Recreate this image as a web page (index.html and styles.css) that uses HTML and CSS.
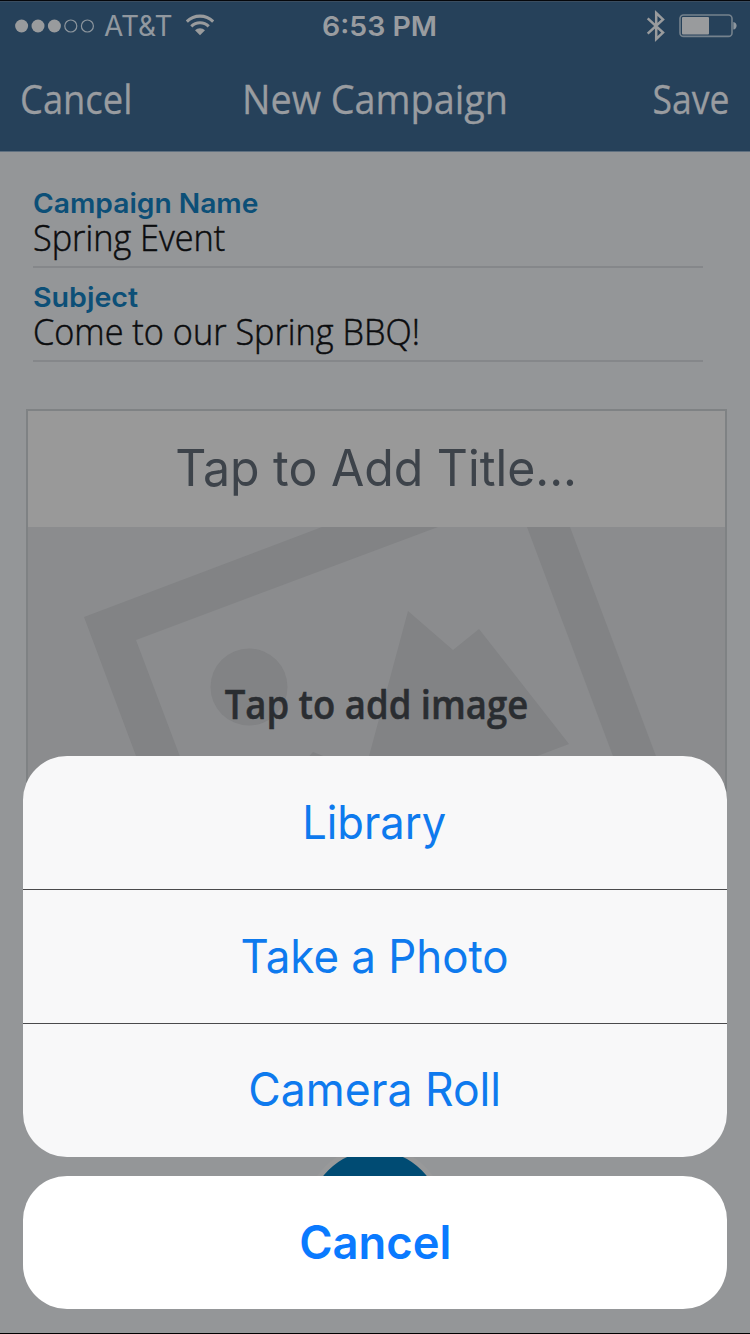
FILE: index.html
```html
<!DOCTYPE html>
<html lang="en">
<head>
<meta charset="utf-8">
<title>New Campaign</title>
<link rel="stylesheet" href="styles.css">
</head>
<body>
<div class="screen">
  <header class="header">
    <div class="status">
      <div class="status-left">
        <svg class="signal" width="80" height="14" viewBox="0 0 80 14">
          <g fill="#999b9d"><circle cx="6.6" cy="7" r="6.5"/><circle cx="23" cy="7" r="6.5"/><circle cx="39.4" cy="7" r="6.5"/></g>
          <g fill="none" stroke="#8d969e" stroke-width="1.2"><circle cx="55.8" cy="7" r="6"/><circle cx="72.4" cy="7" r="6"/></g>
        </svg>
        <span class="carrier">AT&amp;T</span>
        <svg class="wifi" width="28" height="22" viewBox="0 0 28 22">
          <g fill="none" stroke="#999b9d" stroke-width="3.1"><path d="M.8 7.600a18.700 18.700 0 0 1 26.400 0"/><path d="M5.300 12.400a12.300 12.300 0 0 1 17.400 0"/></g>
          <path fill="#999b9d" d="M9 16.300a7.100 7.100 0 0 1 10 0L14 21.300z"/>
        </svg>
      </div>
      <div class="clock"><span class="fit fit-clock">6:53 PM</span></div>
      <div class="status-right">
        <svg width="20" height="32" viewBox="0 0 20 32"><path fill="none" stroke="#999b9d" stroke-width="2.500" d="M1.700 8.300 17 22.600 10.200 29V3L17 9.400 1.700 23.700"/></svg>
        <svg width="59" height="24" viewBox="0 0 59 24">
          <rect x="1" y="1" width="52" height="21.4" rx="3.5" fill="none" stroke="#75828d" stroke-width="1.6"/>
          <rect x="3" y="3" width="27" height="17.4" rx="1" fill="#999b9d"/>
          <path fill="#8d969e" d="M54.3 8c4.4.4 4.4 7.200 0 7.600z"/>
        </svg>
      </div>
    </div>
    <nav class="nav">
      <span class="nav-left"><span class="fit fit-back">Cancel</span></span>
      <span class="nav-title"><span class="fit fit-title">New Campaign</span></span>
      <span class="nav-right"><span class="fit fit-save">Save</span></span>
    </nav>
  </header>

  <main class="content">
    <div class="field">
      <div class="label"><span class="fit fit-label1">Campaign Name</span></div>
      <div class="value"><span class="fit fit-value">Spring Event</span></div>
    </div>
    <div class="field">
      <div class="label"><span class="fit fit-label2">Subject</span></div>
      <div class="value"><span class="fit fit-value">Come to our Spring BBQ!</span></div>
    </div>
    <section class="card">
      <div class="card-title"><span class="fit fit-heading">Tap to Add Title...</span></div>
      <div class="photo">
        <svg class="placeholder" width="697" height="420" viewBox="28 527 697 420">
          <g fill="#828385">
            <path d="M84 617 322 527H438L136 640 216 852H172z"/>
            <path d="M527 527H570L692 852H649z"/>
            <circle cx="249" cy="687" r="38.500"/>
            <path d="M408 611 453 650 479 629 569 744 350 827z"/>
            <path d="M313 752 336 761 345 800H270z"/>
          </g>
        </svg>
        <div class="photo-text"><span class="fit fit-photo">Tap to add image</span></div>
      </div>
    </section>
  </main>

  <div class="add-button"></div>

  <div class="sheet">
    <div class="group">
      <div class="option"><span class="fit fit-library">Library</span></div>
      <div class="option"><span class="fit fit-take">Take a Photo</span></div>
      <div class="option"><span class="fit fit-roll">Camera Roll</span></div>
    </div>
    <div class="dismiss"><span class="fit fit-cancel">Cancel</span></div>
  </div>
</div>
</body>
</html>
```

FILE: styles.css
```css
* { box-sizing: border-box; }
body { margin: 0; font-family: Inter, "Liberation Sans", sans-serif; }
svg { display: block; }
.screen {
  position: relative;
  width: 750px;
  height: 1334px;
  overflow: hidden;
  background: #949698;
  border-top: 1px solid #05070b;
  border-bottom: 1px solid #000;
}

/* Horizontal fitting of the text runs */
.fit { display: inline-block; white-space: nowrap; }
.fit-clock { transform: scaleX(1.055); }
.fit-back { transform: scaleX(.92); transform-origin: left; }
.fit-title { transform: scaleX(.957); }
.fit-save { transform: scaleX(.9); transform-origin: right; }
.fit-label1 { transform: scaleX(1.025); transform-origin: left; }
.fit-label2 { transform: scaleX(1.04); transform-origin: left; }
.fit-value { transform: scaleX(.952); transform-origin: left; }
.fit-heading { transform: scaleX(.965); }
.fit-photo { transform: scaleX(.912); }
.fit-library { transform: scaleX(.945); }
.fit-take { transform: scaleX(.953); }
.fit-roll { transform: scaleX(.967); }
.fit-cancel { transform: scaleX(.985); }

.header { height: 151px; background: #26415a; border-top: 1px solid #3a4d60; border-bottom: 1px solid #5f7080; color: #999ca0; }
.status { display: grid; grid-template-columns: 1fr auto 1fr; height: 48px; align-items: center; padding: 0 12px 0 15px; }
.status-left { display: flex; align-items: center; }
.carrier { margin-left: 9px; font-size: 28px; line-height: 34px; color: #91989f; }
.wifi { margin-left: 13px; margin-top: -3px; }
.clock { padding-left: 6px; font-size: 27.500px; font-weight: 600; line-height: 34px; }
.fit-clock { transform: scaleX(1.035); }
.status-right { display: flex; justify-content: flex-end; align-items: center; gap: 13px; }

.nav { display: grid; grid-template-columns: 1fr auto 1fr; padding: 24px 20px 0 20px; font-family: "Open Sans", "Noto Sans", sans-serif; font-size: 39.500px; line-height: 50px; -webkit-text-stroke: .3px #999ca0; }
.nav-right { text-align: right; }

.content { padding: 33px 24px 0 26px; }
.field { height: 94px; margin: 0 23px 0 7px; border-bottom: 2px solid #85878a; padding-top: 13px; }
.field:first-child { height: 83px; padding-top: 2px; }
.label { height: 33px; font-size: 27.500px; font-weight: 600; line-height: 33px; color: #0c4f77; }
.value { height: 40px; font-family: "Open Sans", "Noto Sans", sans-serif; font-size: 36px; font-weight: 300; line-height: 36px; color: #0b0c0e; -webkit-text-stroke: .5px #0b0c0e; }

.card { width: 701px; margin-top: 47px; border: 2px solid #7f8284; }
.card-title { height: 116px; background: #999; font-size: 50px; line-height: 115px; text-align: center; color: #3d434a; }
.photo { position: relative; height: 420px; background: #8b8c8e; }
.photo-text { position: absolute; left: 0; right: 0; top: 147px; font-family: "Open Sans", "Noto Sans", sans-serif; font-weight: 600; font-size: 40px; line-height: 60px; text-align: center; color: #2a2d31; -webkit-text-stroke: .5px #2a2d31; }

.add-button { position: absolute; left: 304px; top: 1145px; width: 142px; height: 142px; border: 5px solid #98999a; border-radius: 50%; background: #004b73; }

.sheet { position: absolute; left: 23px; top: 755px; width: 704px; display: flex; flex-direction: column; gap: 19px; color: #0e7aee; font-size: 46px; text-align: center; }
.group { height: 401px; border-radius: 44px; background: #f8f8f9; overflow: hidden; }
.option { height: 134px; line-height: 132px; border-bottom: 1px solid #4a4a4c; }
.option:last-child { border: 0; height: 133px; line-height: 131px; }
.option .fit { margin-left: -1px; }
.dismiss { height: 133px; line-height: 133px; border-radius: 44px; background: #fff; color: #0a7aff; font-weight: 600; }
```
